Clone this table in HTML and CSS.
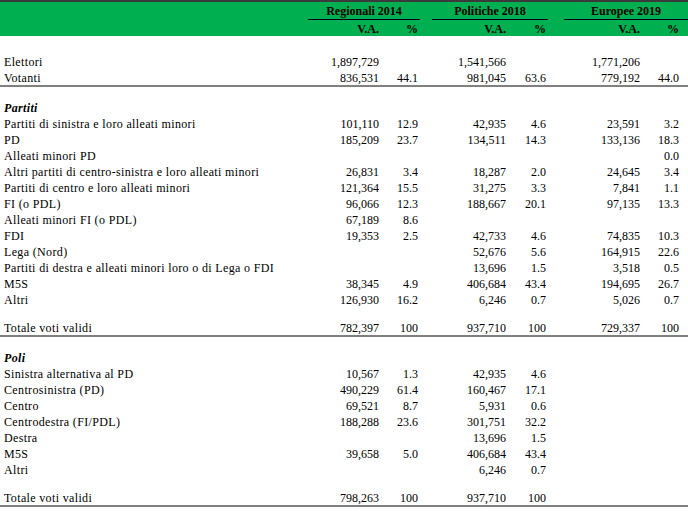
FILE: index.html
```html
<!DOCTYPE html>
<html lang="it">
<head>
<meta charset="utf-8">
<title>Risultati elettorali</title>
<link rel="stylesheet" href="styles.css">
</head>
<body>
<table class="tab">
  <colgroup>
    <col class="c-label">
    <col class="c-va1">
    <col class="c-p1">
    <col class="c-gap1">
    <col class="c-va2">
    <col class="c-p2">
    <col class="c-gap2">
    <col class="c-va3">
    <col class="c-p3">
  </colgroup>
  <thead>
    <tr class="h1">
      <th></th>
      <th colspan="2" class="grp">Regionali 2014</th>
      <th></th>
      <th colspan="2" class="grp">Politiche 2018</th>
      <th></th>
      <th colspan="2" class="grp">Europee 2019</th>
    </tr>
    <tr class="h2">
      <th></th>
      <th class="n">V.A.</th><th class="n">%</th>
      <th></th>
      <th class="n">V.A.</th><th class="n">%</th>
      <th></th>
      <th class="n">V.A.</th><th class="n pl">%</th>
    </tr>
  </thead>
  <tbody>
    <tr class="sp-a"><td colspan="9"></td></tr>
    <tr><td>Elettori</td><td class="n">1,897,729</td><td class="n"></td><td></td><td class="n">1,541,566</td><td class="n"></td><td></td><td class="n">1,771,206</td><td class="n pl"></td></tr>
    <tr class="tot"><td>Votanti</td><td class="n">836,531</td><td class="n">44.1</td><td></td><td class="n">981,045</td><td class="n">63.6</td><td></td><td class="n">779,192</td><td class="n pl">44.0</td></tr>
    <tr class="sp-b"><td colspan="9"></td></tr>
    <tr><td class="sec">Partiti</td><td colspan="8"></td></tr>
    <tr><td>Partiti di sinistra e loro alleati minori</td><td class="n">101,110</td><td class="n">12.9</td><td></td><td class="n">42,935</td><td class="n">4.6</td><td></td><td class="n">23,591</td><td class="n pl">3.2</td></tr>
    <tr><td>PD</td><td class="n">185,209</td><td class="n">23.7</td><td></td><td class="n">134,511</td><td class="n">14.3</td><td></td><td class="n">133,136</td><td class="n pl">18.3</td></tr>
    <tr><td>Alleati minori PD</td><td class="n"></td><td class="n"></td><td></td><td class="n"></td><td class="n"></td><td></td><td class="n"></td><td class="n pl">0.0</td></tr>
    <tr><td>Altri partiti di centro-sinistra e loro alleati minori</td><td class="n">26,831</td><td class="n">3.4</td><td></td><td class="n">18,287</td><td class="n">2.0</td><td></td><td class="n">24,645</td><td class="n pl">3.4</td></tr>
    <tr><td>Partiti di centro e loro alleati minori</td><td class="n">121,364</td><td class="n">15.5</td><td></td><td class="n">31,275</td><td class="n">3.3</td><td></td><td class="n">7,841</td><td class="n pl">1.1</td></tr>
    <tr><td>FI (o PDL)</td><td class="n">96,066</td><td class="n">12.3</td><td></td><td class="n">188,667</td><td class="n">20.1</td><td></td><td class="n">97,135</td><td class="n pl">13.3</td></tr>
    <tr><td>Alleati minori FI (o PDL)</td><td class="n">67,189</td><td class="n">8.6</td><td></td><td class="n"></td><td class="n"></td><td></td><td class="n"></td><td class="n pl"></td></tr>
    <tr><td>FDI</td><td class="n">19,353</td><td class="n">2.5</td><td></td><td class="n">42,733</td><td class="n">4.6</td><td></td><td class="n">74,835</td><td class="n pl">10.3</td></tr>
    <tr><td>Lega (Nord)</td><td class="n"></td><td class="n"></td><td></td><td class="n">52,676</td><td class="n">5.6</td><td></td><td class="n">164,915</td><td class="n pl">22.6</td></tr>
    <tr><td>Partiti di destra e alleati minori loro o di Lega o FDI</td><td class="n"></td><td class="n"></td><td></td><td class="n">13,696</td><td class="n">1.5</td><td></td><td class="n">3,518</td><td class="n pl">0.5</td></tr>
    <tr><td>M5S</td><td class="n">38,345</td><td class="n">4.9</td><td></td><td class="n">406,684</td><td class="n">43.4</td><td></td><td class="n">194,695</td><td class="n pl">26.7</td></tr>
    <tr><td>Altri</td><td class="n">126,930</td><td class="n">16.2</td><td></td><td class="n">6,246</td><td class="n">0.7</td><td></td><td class="n">5,026</td><td class="n pl">0.7</td></tr>
    <tr class="sp-c"><td colspan="9"></td></tr>
    <tr class="tot"><td>Totale voti validi</td><td class="n">782,397</td><td class="n">100</td><td></td><td class="n">937,710</td><td class="n">100</td><td></td><td class="n">729,337</td><td class="n pl">100</td></tr>
    <tr class="sp-d"><td colspan="9"></td></tr>
    <tr><td class="sec">Poli</td><td colspan="8"></td></tr>
    <tr><td>Sinistra alternativa al PD</td><td class="n">10,567</td><td class="n">1.3</td><td></td><td class="n">42,935</td><td class="n">4.6</td><td></td><td class="n"></td><td class="n pl"></td></tr>
    <tr><td>Centrosinistra (PD)</td><td class="n">490,229</td><td class="n">61.4</td><td></td><td class="n">160,467</td><td class="n">17.1</td><td></td><td class="n"></td><td class="n pl"></td></tr>
    <tr><td>Centro</td><td class="n">69,521</td><td class="n">8.7</td><td></td><td class="n">5,931</td><td class="n">0.6</td><td></td><td class="n"></td><td class="n pl"></td></tr>
    <tr><td>Centrodestra (FI/PDL)</td><td class="n">188,288</td><td class="n">23.6</td><td></td><td class="n">301,751</td><td class="n">32.2</td><td></td><td class="n"></td><td class="n pl"></td></tr>
    <tr><td>Destra</td><td class="n"></td><td class="n"></td><td></td><td class="n">13,696</td><td class="n">1.5</td><td></td><td class="n"></td><td class="n pl"></td></tr>
    <tr><td>M5S</td><td class="n">39,658</td><td class="n">5.0</td><td></td><td class="n">406,684</td><td class="n">43.4</td><td></td><td class="n"></td><td class="n pl"></td></tr>
    <tr><td>Altri</td><td class="n"></td><td class="n"></td><td></td><td class="n">6,246</td><td class="n">0.7</td><td></td><td class="n"></td><td class="n pl"></td></tr>
    <tr class="sp-c"><td colspan="9"></td></tr>
    <tr class="tot"><td>Totale voti validi</td><td class="n">798,263</td><td class="n">100</td><td></td><td class="n">937,710</td><td class="n">100</td><td></td><td class="n"></td><td class="n pl"></td></tr>
  </tbody>
</table>
</body>
</html>
```

FILE: styles.css
```css
html, body {
  margin: 0;
  padding: 0;
  background: #ffffff;
}

.tab {
  table-layout: fixed;
  width: 688px;
  border-collapse: separate;
  border-spacing: 0;
  font-family: "Liberation Serif", "Times New Roman", serif;
  font-size: 12px;
  color: #000;
  border-top: 2px solid #3a3a3a;
}

.c-label { width: 308px; }
.c-va1 { width: 73px; }
.c-p1 { width: 39px; }
.c-gap1 { width: 12px; }
.c-va2 { width: 76px; }
.c-p2 { width: 40px; }
.c-gap2 { width: 16px; }
.c-va3 { width: 78px; }
.c-p3 { width: 46px; }

.tab th,
.tab td {
  padding: 0 2px 0 4px;
  height: 16px;
  line-height: 14px;
  vertical-align: bottom;
  white-space: nowrap;
  overflow: hidden;
}

.tab tbody td:first-child {
  letter-spacing: 0.35px;
}

.tab thead th {
  background: #00b050;
  font-weight: bold;
}

.tab .h1 th { height: 16px; }
.tab .h1 .grp {
  text-align: center;
  border-bottom: 1px solid #000;
  padding: 0 0 1px 0;
}
.tab .h2 th { height: 16px; }

.tab .n { text-align: right; padding-left: 0; }
.tab .pl { padding-right: 9px; }

.tab .sec {
  font-weight: bold;
  font-style: italic;
}

.tab .sp-a td { height: 17px; }
.tab .sp-b td { height: 12px; }
.tab .sp-c td { height: 12px; }
.tab .sp-d td { height: 12px; }

.tab .tot td {
  border-bottom: 2px solid #808080;
}
```
